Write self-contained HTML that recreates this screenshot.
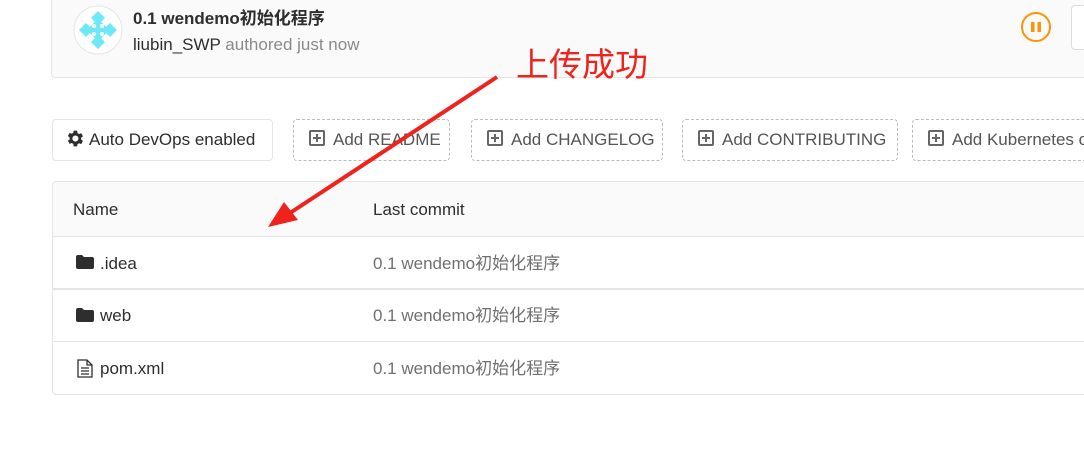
<!DOCTYPE html>
<html><head><meta charset="utf-8"><style>
body{margin:0;width:1084px;height:468px;background:#fff;position:relative;overflow:hidden;font-family:"Liberation Sans","Noto Sans CJK SC",sans-serif;color:#2e2e2e}
.a{position:absolute}
.top{left:51px;top:-10px;width:1100px;height:88px;background:#fafafa;border:1px solid #e5e5e5;border-radius:4px;box-sizing:border-box}
.btn{position:absolute;top:119px;height:42px;box-sizing:border-box;border:1px dashed #bbb;border-radius:4px;font-size:17px;color:#555;line-height:40px;padding-left:15px;white-space:nowrap}
.btn .pl{display:inline-block;width:12px;height:12px;border:2px solid #666;border-radius:2px;vertical-align:-1px;margin-right:8px;position:relative}
.pl:before{content:"";position:absolute;left:2px;top:5px;width:8px;height:2px;background:#666}
.pl:after{content:"";position:absolute;left:5px;top:2px;width:2px;height:8px;background:#666}
.tbl{left:52px;top:181px;width:1100px;height:214px;border:1px solid #e5e5e5;border-radius:4px;box-sizing:border-box;overflow:hidden}
.row{position:absolute;left:0;width:100%;font-size:17px}
.row span{position:absolute;line-height:20px;height:20px}
.c2{left:320px;color:#707070}
</style></head><body>
<div class="a top"></div>
<svg class="a" style="left:73px;top:5px" width="50" height="50" viewBox="0 0 50 50">
<circle cx="25" cy="25" r="24" fill="#fff" stroke="#e5e5e5"/>
<g fill="#6ee8f5"><path d="M25 6 L32 13 L25 20 L18 13Z"/><path d="M25 30 L32 37 L25 44 L18 37Z"/><path d="M6 25 L13 18 L20 25 L13 32Z"/><path d="M30 25 L37 18 L44 25 L37 32Z"/>
<rect x="17" y="17" width="16" height="16" transform="rotate(45 25 25)"/></g>
<g fill="#fff"><circle cx="21" cy="21" r="2"/><circle cx="29" cy="21" r="2"/><circle cx="21" cy="29" r="2"/><circle cx="29" cy="29" r="2"/></g>
</svg>
<div class="a" style="left:133px;top:8px;font-size:17px;font-weight:bold;color:#2e2e2e;line-height:22px">0.1 wendemo初始化程序</div>
<div class="a" style="left:133px;top:35px;font-size:17px;color:#2e2e2e;line-height:20px">liubin_SWP <span style="color:#8a8a8a">authored just now</span></div>
<svg class="a" style="left:1020px;top:11px" width="32" height="32"><circle cx="16" cy="16" r="14" fill="none" stroke="#fc9403" stroke-width="2"/><rect x="11" y="11" width="3.5" height="10" fill="#fc9403"/><rect x="17.5" y="11" width="3.5" height="10" fill="#fc9403"/></svg>
<div class="a" style="left:1071px;top:5px;width:40px;height:43px;border:1px solid #ddd;border-radius:4px;background:#fff"></div>

<div class="btn" style="left:52px;width:221px;border:1px solid #e5e5e5;color:#2e2e2e;padding-left:12px">
<svg width="21" height="21" viewBox="0 0 24 24" style="vertical-align:-4px;margin-right:3px"><path fill="#2e2e2e" fill-rule="evenodd" d="M19.4 13a7.5 7.5 0 000-2l2.1-1.6-2-3.5-2.5 1a7 7 0 00-1.7-1L14.9 3h-4l-.4 2.6a7 7 0 00-1.7 1l-2.5-1-2 3.5L6.4 11a7.5 7.5 0 000 2l-2.1 1.6 2 3.5 2.5-1a7 7 0 001.7 1l.4 2.9h4l.4-2.6a7 7 0 001.7-1l2.5 1 2-3.5zM12.9 15.5a3.5 3.5 0 110-7 3.5 3.5 0 010 7z" transform="translate(-1 0)"/></svg>Auto DevOps enabled</div>
<div class="btn" style="left:293px;width:157px"><i class="pl"></i>Add README</div>
<div class="btn" style="left:471px;width:192px"><i class="pl"></i>Add CHANGELOG</div>
<div class="btn" style="left:682px;width:216px"><i class="pl"></i>Add CONTRIBUTING</div>
<div class="btn" style="left:912px;width:200px"><i class="pl"></i>Add Kubernetes cluster</div>

<div class="a tbl">
<div class="row" style="top:0;height:54px;background:#fafafa;border-bottom:1px solid #e5e5e5"><span style="left:20px;top:18px">Name</span><span style="left:320px;top:18px">Last commit</span></div>
<div class="row" style="top:55px;height:51px;border-bottom:2px solid #e5e5e5">
<svg style="position:absolute;left:23px;top:18px" width="18" height="14"><path d="M0 2 Q0 0 2 0 H6 L8 2 H16 Q18 2 18 4 V12 Q18 14 16 14 H2 Q0 14 0 12Z" fill="#2e2e2e"/></svg>
<span style="left:47px;top:17px">.idea</span><span class="c2" style="top:17px">0.1 wendemo初始化程序</span></div>
<div class="row" style="top:108px;height:51px;border-bottom:1px solid #e5e5e5">
<svg style="position:absolute;left:23px;top:18px" width="18" height="14"><path d="M0 2 Q0 0 2 0 H6 L8 2 H16 Q18 2 18 4 V12 Q18 14 16 14 H2 Q0 14 0 12Z" fill="#2e2e2e"/></svg>
<span style="left:47px;top:16px">web</span><span class="c2" style="top:16px">0.1 wendemo初始化程序</span></div>
<div class="row" style="top:160px;height:53px">
<svg style="position:absolute;left:24px;top:17px" width="16" height="19"><path d="M1 1 H10 L15 6 V18 H1Z M10 1 V6 H15" fill="none" stroke="#2e2e2e" stroke-width="1.3"/><path d="M4 9H12M4 12H12M4 15H12" stroke="#2e2e2e" stroke-width="1.2"/></svg>
<span style="left:47px;top:17px">pom.xml</span><span class="c2" style="top:17px">0.1 wendemo初始化程序</span></div>
</div>

<svg class="a" style="left:0;top:0" width="1084" height="468"><line x1="497" y1="77" x2="290" y2="213" stroke="#f0221c" stroke-width="4"/><path d="M268 227 L284 202 L298 220Z" fill="#f0221c"/></svg>
<div class="a" style="left:516px;top:42px;font-size:33px;color:#f0221c;font-family:'Noto Sans CJK SC',sans-serif;line-height:40px">上传成功</div>
</body></html>
